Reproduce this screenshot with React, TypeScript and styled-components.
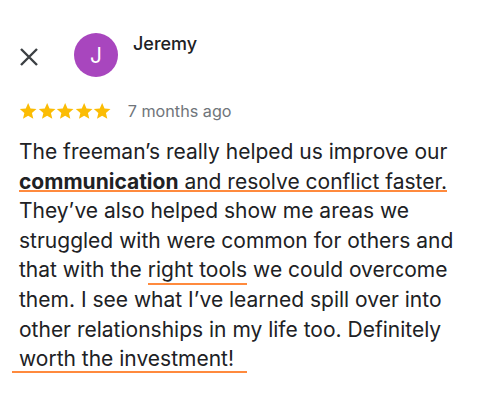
import React from "react";
import styled, { createGlobalStyle } from "styled-components";

const Global = createGlobalStyle`
  html, body { margin: 0; padding: 0; background: #ffffff; }
  body { font-family: Inter, "Noto Sans", sans-serif; -webkit-font-smoothing: antialiased; }
`;

const Card = styled.div`
  width: 500px;
  height: 400px;
  box-sizing: border-box;
  padding: 33px 0 0 19px;
  background: #fff;
  display: flex;
  flex-direction: column;
`;

const Header = styled.div`
  display: flex;
  align-items: flex-start;
`;

const CloseButton = styled.button`
  border: none;
  background: none;
  padding: 0;
  margin: 14px 0 0 0;
  width: 20px;
  height: 20px;
  display: flex;
  align-items: center;
  justify-content: center;
  color: #3c4043;
`;

const Avatar = styled.div`
  width: 44px;
  height: 44px;
  border-radius: 50%;
  background: #a846be;
  color: #fff;
  display: flex;
  align-items: center;
  justify-content: center;
  font-size: 21px;
  font-weight: 400;
  margin-left: 35px;
`;

const Name = styled.div`
  margin-left: 15px;
  margin-top: 0px;
  font-size: 18px;
  font-weight: 500;
  color: #202124;
`;

const RatingRow = styled.div`
  display: flex;
  align-items: center;
  margin-top: 25px;
  height: 18px;
`;

const Stars = styled.div`
  display: flex;
  gap: 0.3px;
`;

const Ago = styled.span`
  margin-left: 16px;
  font-size: 16.2px;
  color: #70757a;
`;

const Body = styled.p`
  margin: 17px 0 0 0;
  width: 440px;
  font-size: 21px;
  line-height: 29.6px;
  color: #202124;
`;

const Mark = styled.span<{ $y: number; $left?: number; $right?: number }>`
  padding-bottom: 6px;
  padding-left: ${(p) => p.$left ?? 0}px;
  padding-right: ${(p) => p.$right ?? 0}px;
  margin-left: ${(p) => -(p.$left ?? 0)}px;
  background-image: linear-gradient(#ff8a3d, #ff8a3d);
  background-repeat: no-repeat;
  background-size: 100% 2px;
  background-position: 0 calc(100% - ${(p) => 9 - p.$y}px);
`;

const Bold = styled.b`
  font-weight: 700;
`;

const Star = () => (
  <svg width="18.3" height="18" viewBox="0 0 24 24">
    <path
      fill="#fbbc04"
      d="M12 1.2l3.15 7.35 7.95.7-6.05 5.25 1.83 7.8L12 18.2l-6.88 4.1 1.83-7.8-6.05-5.25 7.950-.7z"
    />
  </svg>
);

export default function App() {
  return (
    <>
      <Global />
      <Card>
        <Header>
          <CloseButton aria-label="close">
            <svg width="20" height="20" viewBox="0 0 20 20">
              <path d="M2 2L18 18M18 2L2 18" stroke="#3c4043" strokeWidth="2.4" />
            </svg>
          </CloseButton>
          <Avatar>J</Avatar>
          <Name>Jeremy</Name>
        </Header>
        <RatingRow>
          <Stars>
            <Star />
            <Star />
            <Star />
            <Star />
            <Star />
          </Stars>
          <Ago>7 months ago</Ago>
        </RatingRow>
        <Body>
          The freeman’s really helped us improve our{" "}
          <Mark $y={1}>
            <Bold>communication</Bold> and resolve conflict faster.
          </Mark>{" "}
          They’ve also helped show me areas we struggled with were common for others and that
          with the <Mark $y={6}>right tools</Mark> we could overcome them. I see what I’ve learned
          spill over into other relationships in my life too. Definitely{" "}
          <Mark $y={5} $left={7} $right={13}>
            worth the investment!
          </Mark>
        </Body>
      </Card>
    </>
  );
}
